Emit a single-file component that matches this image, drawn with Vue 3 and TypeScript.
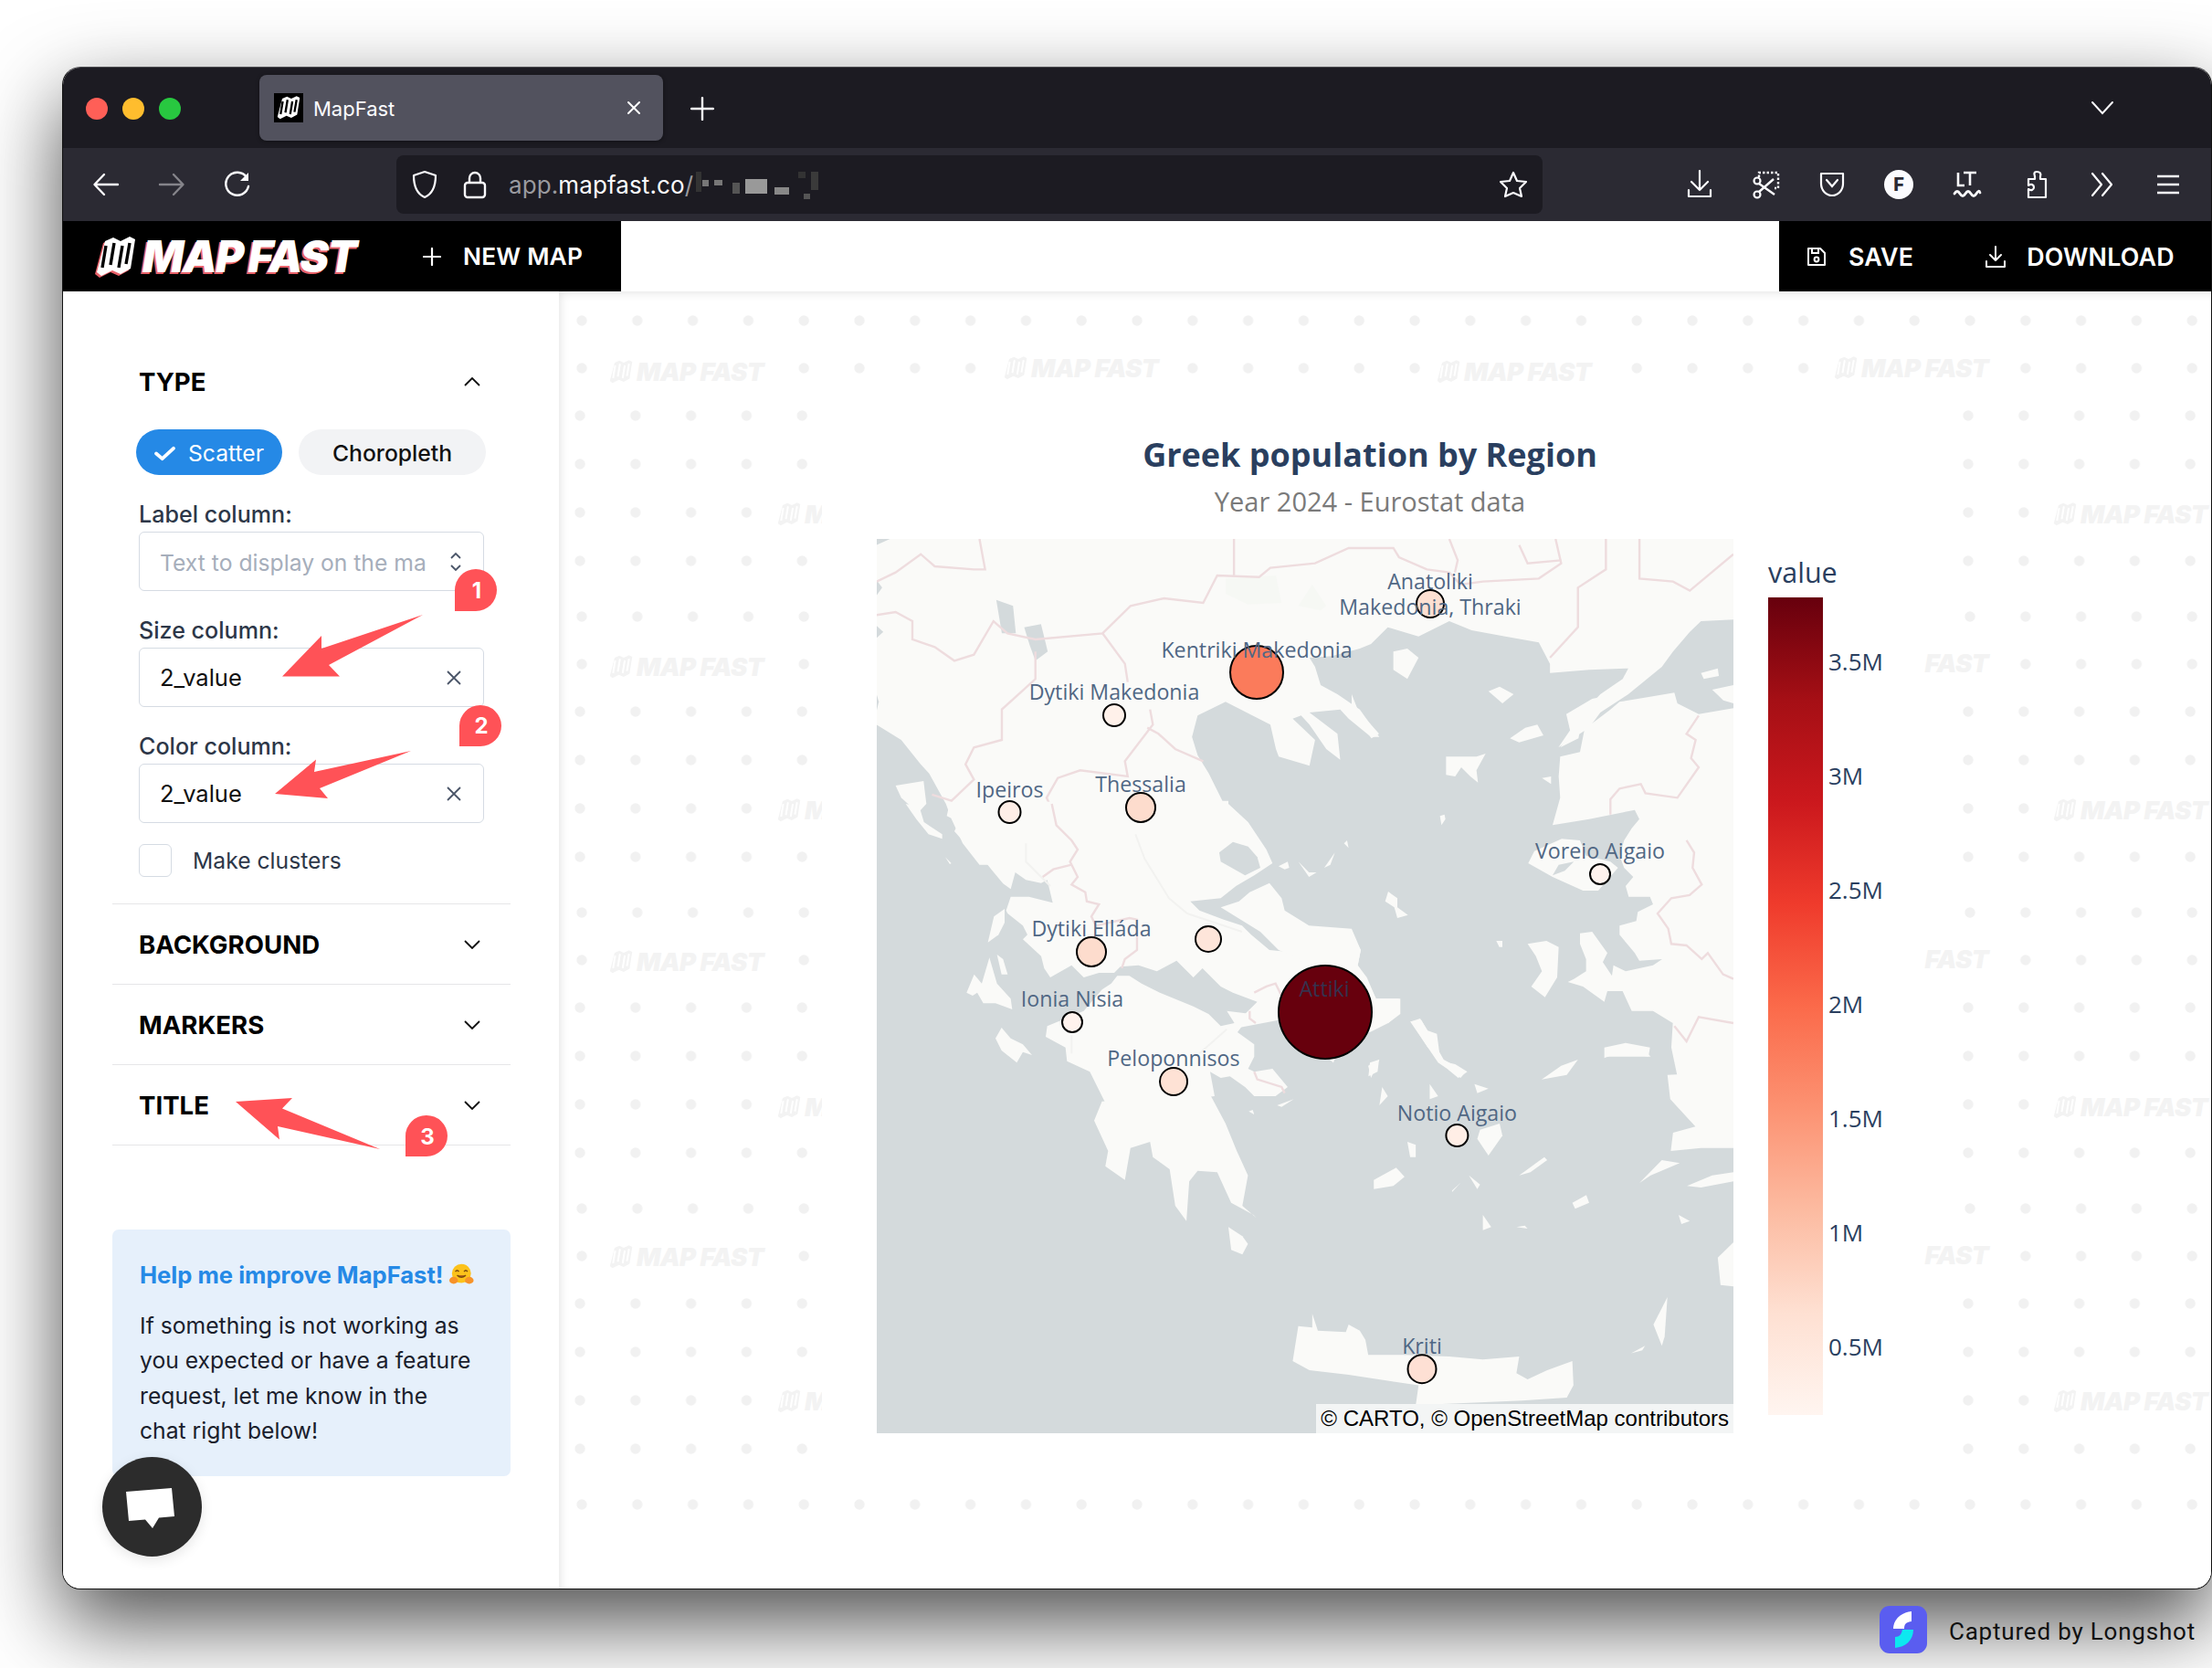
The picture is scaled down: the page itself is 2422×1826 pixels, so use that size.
<script setup lang="ts">
interface Marker { x: number; y: number; r: number; fill: string }
interface MapLabel { x: number; y: number; text: string; dark?: boolean }
interface Mark { x: number; y: number }

const mapOuter = 'M12 7 L21 3 L29 7 L39 2 L45 5 L40 37 L29 43 L20 39 L8 45 L3 41 Z'
const mapInner = 'M13 12 L9 36 M22 9 L18 33 M31 12 L27 36 M39 9 L35 32'

const markers: Marker[] = [
  { x: 1566, y: 661, r: 15, fill: '#fde0d2' },
  { x: 1376, y: 736, r: 29, fill: '#fb7b5b' },
  { x: 1220, y: 783, r: 12, fill: '#fff1ea' },
  { x: 1105.5, y: 889, r: 12, fill: '#feeee7' },
  { x: 1249, y: 884, r: 16, fill: '#fddccd' },
  { x: 1752, y: 957, r: 11, fill: '#fff3ee' },
  { x: 1195, y: 1042, r: 16, fill: '#fddccd' },
  { x: 1323, y: 1028, r: 14, fill: '#fee5da' },
  { x: 1174, y: 1119, r: 11, fill: '#fff3ee' },
  { x: 1285, y: 1184, r: 15, fill: '#fee2d5' },
  { x: 1451, y: 1108, r: 51, fill: '#67000d' },
  { x: 1595.4, y: 1243, r: 12, fill: '#ffeee6' },
  { x: 1557, y: 1498.7, r: 15.5, fill: '#fee0d4' }
]

const labels: MapLabel[] = [
  { x: 1566, y: 637, text: 'Anatoliki' },
  { x: 1566, y: 665, text: 'Makedonia, Thraki' },
  { x: 1376, y: 712, text: 'Kentriki Makedonia' },
  { x: 1220, y: 758, text: 'Dytiki Makedonia' },
  { x: 1105.5, y: 865, text: 'Ipeiros' },
  { x: 1249, y: 859, text: 'Thessalia' },
  { x: 1752, y: 932, text: 'Voreio Aigaio' },
  { x: 1195, y: 1017, text: 'Dytiki Elláda' },
  { x: 1174, y: 1094, text: 'Ionia Nisia' },
  { x: 1285, y: 1159, text: 'Peloponnisos' },
  { x: 1450, y: 1083, text: 'Attiki', dark: true },
  { x: 1595.4, y: 1219, text: 'Notio Aigaio' },
  { x: 1557, y: 1474, text: 'Kriti' }
]

// land traced in four overlapping frames of the map
const north = [
  '16,30 1548,30 1548,295 1490,300 1470,335 1440,400 1420,450 1400,480 1360,540 1310,600 1290,650 1235,715 1270,620 1310,540 1350,490 1360,455 1290,460 1220,470 1220,440 1200,370 1140,350 1080,330 1040,300 985,350 930,320 900,375 880,390 830,415 790,420 800,450 810,510 840,540 880,590 915,680 900,680 860,620 845,590 790,600 840,670 845,755 820,720 790,640 775,610 760,620 800,690 790,775 735,745 730,720 720,640 640,565 590,610 580,680 590,740 610,800 637,900 637,1000 400,1100 200,1100 170,1030 150,950 140,900 110,800 95,770 60,690 16,640',
  '50,840 100,825 105,900 90,930 60,880',
  '940,400 965,390 985,420 965,490 940,460',
  '1110,530 1130,515 1155,540 1135,570',
  '1490,470 1520,455 1522,480 1495,490',
  '1510,525 1548,510 1548,570 1530,560'
]
const centre = [
  '240,-5 230,40 270,60 255,90 290,130 340,170 380,220 415,262 440,280 455,225 490,250 540,260 560,250 578,325 500,305 440,305 425,350 430,360 480,400 495,430 480,445 540,500 550,540 570,570 640,530 680,570 730,555 780,555 800,535 860,530 920,550 985,515 1040,570 1070,540 1130,600 1170,620 1250,650 1200,700 1190,735 1320,710 1500,850 1560,700 1395,520 1390,490 1290,480 1230,430 1200,400 1140,380 1060,350 1030,320 1130,310 1180,270 1240,235 1300,195 1280,150 1220,60 1155,0 1155,-10',
  '1150,680 1175,720 1130,730 1090,690 1040,665 930,620 870,590 830,565 790,565 770,590 740,610 680,680 560,730 555,765 620,800 625,845 700,880 750,980 745,1005 1110,960 1095,880 1130,900 1160,895 1210,930 1240,960 1310,960 1350,930 1300,870 1240,880 1220,870 1240,830 1240,790 1185,750 1230,690',
  '95,0 140,10 155,60 215,100 215,115 170,100 130,50',
  '225,175 245,195 240,198',
  '295,620 320,560 345,590 370,505 395,590 440,640 445,675 390,655 350,655 330,620 315,630',
  '395,495 415,510 430,560 410,560',
  '365,455 385,370 420,345 420,390 400,430',
  '390,770 410,735 440,770 480,790 510,825 480,815 460,850 410,810',
  '1130,340 1190,320 1225,290 1290,260 1330,310 1340,350 1420,400 1560,410 1590,480 1580,530 1610,570 1640,640 1720,640 1720,690 1680,720 1620,750 1470,690 1390,510 1320,480 1260,420',
  '1320,205 1350,190 1355,210 1340,215',
  '1385,190 1420,225 1445,225 1420,240',
  '1470,210 1505,160 1490,200',
  '1535,130 1545,120 1550,145',
  '1315,990 1370,970 1330,995',
  '1222,1010 1235,1005 1240,1020'
]
const east = [
  '880,25 1060,-5 1070,30 1140,65 1260,45 1260,1260 1071,1260 1050,1160 1055,1080 990,1040 920,1040 890,975 840,975 830,1010 760,960 710,945 730,935 770,910 770,870 750,820 750,785 790,780 840,850 825,880 855,925 860,890 900,910 990,890 1020,870 945,875 930,850 880,790 880,760 935,745 940,715 990,690 980,665 910,665 900,630 925,600 895,570 880,530 895,480 920,440 945,410 930,380 780,410 660,430 685,340 680,270 685,205 750,190 765,115 850,50',
  '685,175 720,130 705,65 790,15 860,0 830,45 770,100 750,120 745,145',
  '520,145 570,110 610,100 630,135 550,158',
  '310,205 380,205 410,205 440,195 410,250 415,290 390,270 360,240 340,270 310,265',
  '625,275 655,270 655,295',
  '290,400 305,395 308,410 295,430',
  '110,680 120,648 150,670 150,700 185,725 150,735 140,700',
  '578,820 640,810 680,830 675,930 635,995 590,960 625,910 605,860',
  '475,810 495,810 495,830 485,830',
  '580,555 600,515 690,475 750,480 770,530 850,550 875,570 840,610 810,645 760,645 660,600',
  '0,790 30,840 20,890 45,930 80,1000 30,1000 0,950',
  '80,1000 155,1000 155,1050 120,1080 90,1070',
  '195,1075 225,1065 250,1105 280,1115 290,1190 250,1160',
  '60,1210 90,1200 85,1240 55,1255',
  '295,1205 340,1215 380,1240 350,1260 320,1235',
  '830,1160 900,1145 980,1160 975,1190 880,1175 830,1195',
  '0,0 20,50 90,130 65,145 25,90 0,50',
  '480,0 525,0 490,25'
]
const seaEast = ['660,595 680,560 730,550 700,580']
const south = [
  '419,437 405,500 430,600 425,650 460,695 470,590 505,570 510,620 540,660 550,780 570,830 575,700 590,665 625,670 650,770 690,810 695,820 670,780 680,680 660,600 640,510 613,417',
  '645,850 670,880 680,905 670,940 650,925',
  '760,1290 770,1175 795,1180 795,1135 805,1190 855,1195 860,1170 880,1190 890,1220 895,1270 960,1270 1040,1275 1100,1285 1165,1275 1160,1330 1180,1350 1215,1320 1260,1290 1262,1370 1250,1410 1170,1420 980,1435 985,1370 860,1335 790,1320',
  '1430,350 1435,430 1480,520 1440,540 1436,600 1490,590 1548,590 1548,340',
  '1095,530 1130,510 1135,550 1110,615 1090,560',
  '965,570 980,580 980,620 970,620',
  '970,175 990,170 1030,300 1070,340 1060,360 1020,310',
  '895,320 915,300 900,360',
  '920,390 930,420 915,450',
  '1005,380 1020,420 1005,430',
  '1085,380 1110,395 1090,410',
  '905,695 945,655 960,685 940,715 905,725',
  '1075,680 1095,710 1090,725',
  '1045,730 1060,705 1045,735',
  '1100,810 1115,850 1100,860',
  '1165,680 1210,620 1215,630 1185,670',
  '1405,1170 1430,1080 1425,1210 1420,1240',
  '1365,1265 1390,1240 1385,1255',
  '1205,365 1240,320 1270,300 1250,350',
  '1320,290 1350,250 1390,270 1400,290 1350,290',
  '1465,715 1510,680 1548,670 1548,700 1490,720',
  '1380,705 1420,630 1452,640 1400,680',
  '1525,1040 1520,950 1548,900 1548,1045',
  '1260,770 1285,745 1290,770 1265,790',
  '1450,810 1470,830 1455,840',
  '1160,850 1175,845 1180,855'
]

const seaCentre = ['1125,160 1170,125 1220,140 1250,175 1260,210 1210,235 1130,190']
const lakes = [
  '230,230 260,250 265,340 240,340',
  '280,320 310,310 322,400 300,430 290,380',
  '16,30 40,30 16,50',
  '16,165 26,190 16,215',
  '16,315 28,335 16,355',
  '16,540 20,565 16,595'
]

const bordersNorth = [
  '16,280 50,270 80,300 80,360 120,385 155,430 190,410 225,300 250,340 300,360 420,340 470,250 530,225 600,240 625,150 700,155 720,125 800,110 860,60 940,60 950,90 1000,130 1040,140 1060,180 1100,170 1200,160 1240,110 1230,30',
  '200,30 210,130 190,130 120,120 95,80 50,140 16,170',
  '655,30 655,150',
  '1040,30 1055,100 1050,140',
  '1165,50 1180,110 1240,100',
  '1320,30 1320,130 1270,190 1270,320 1220,420',
  '1380,30 1380,160 1440,170 1470,200 1548,80',
  '300,400 300,490 240,590 240,690 190,715 175,770 190,820 150,890 115,870',
  '420,340 460,440 465,500',
  '505,590 510,640 460,760 465,810 380,790 340,815 320,880 340,960 375,1050 365,1110 380,1170 410,1235 400,1300',
  '500,650 520,670 550,720 600,760'
]
const bordersCentre = [
  '575,0 590,70 640,120 660,150 635,190 660,240 640,265 685,290 690,320 730,330 705,370 720,400 830,375 855,380 855,480 815,510 805,540',
  '545,240 580,215 640,200',
  '1225,680 1225,705 1245,720',
  '1240,620 1280,600 1310,590 1330,630',
  '1240,880 1250,905 1330,930 1340,950'
]
const bordersEast = [
  '850,395 850,345 880,310 950,295 965,325 1070,340 1140,240 1115,210 1130,150 1100,130 1140,70',
  '1100,480 1125,520 1120,570 1150,625 1110,660 1050,670 1005,720 1040,770 1050,820 1100,825 1150,870 1170,850 1220,920 1254,935',
  '1060,1090 1100,1140 1140,1060 1254,1080'
]
const faintCentre = [
  '850,100 880,180 960,310 1020,360 1200,420',
  '490,130 490,190 570,270',
  '640,760 640,820',
  '860,1060 860,980 920,980 1000,1090',
  '1150,740 1060,820'
]

const ticks = ['3.5M', '3M', '2.5M', '2M', '1.5M', '1M', '0.5M']

const wmAt = (x: number, y: number): Mark => ({ x: x - 612, y: y - 319 })
const watermarks: Mark[] = [
  wmAt(670, 407), wmAt(1102, 403), wmAt(1576, 407), wmAt(2011, 403),
  wmAt(854, 563), wmAt(2251, 563),
  wmAt(670, 730), wmAt(2011, 726),
  wmAt(854, 887), wmAt(2251, 887),
  wmAt(670, 1053), wmAt(2011, 1050),
  wmAt(854, 1212), wmAt(2251, 1212),
  wmAt(670, 1376), wmAt(2011, 1374),
  wmAt(854, 1534), wmAt(2251, 1534)
]

const dotRows = [
  { y: 32, x: 25 }, { y: 84, x: 25 }, { y: 136, x: 23 },
  { y: 189, x: 23 }, { y: 242, x: 23 }, { y: 295, x: 23 }
]

const collapsed = ['BACKGROUND', 'MARKERS', 'TITLE']
const pixels = [
  [762, 188, 6, 22, '#333'], [769, 197, 7, 7, '#777'], [782, 197, 9, 6, '#777'],
  [802, 200, 8, 12, '#555'], [816, 196, 24, 16, '#999'], [848, 205, 16, 8, '#888'],
  [874, 188, 8, 7, '#333'], [888, 188, 8, 20, '#3a3a3a'], [880, 212, 7, 6, '#555']
] as const
</script>

<template>
  <div class="page">
    <div class="window">
      <div class="tabbar">
        <div class="lights">
          <span class="light red"></span>
          <span class="light yellow"></span>
          <span class="light green"></span>
        </div>
        <div class="tab">
          <span class="favicon">
            <svg viewBox="0 0 48 48" width="28" height="28">
              <path :d="mapOuter" fill="#fff" />
              <path :d="mapInner" stroke="#000" stroke-width="4" fill="none" />
            </svg>
          </span>
          <span class="tab-title">MapFast</span>
          <svg class="tab-close" viewBox="0 0 16 16" width="16" height="16">
            <path d="M2 2 L14 14 M14 2 L2 14" stroke="#fff" stroke-width="2" stroke-linecap="round" />
          </svg>
        </div>
        <svg class="new-tab" viewBox="0 0 24 24" width="26" height="26">
          <path d="M12 1 V23 M1 12 H23" stroke="#fbfbfe" stroke-width="2.2" stroke-linecap="round" />
        </svg>
        <svg class="tabs-menu" viewBox="0 0 24 16" width="26" height="16">
          <path d="M1 2 L12 14 L23 2" stroke="#fbfbfe" stroke-width="2" fill="none" stroke-linecap="round" />
        </svg>
      </div>

      <div class="toolbar">
        <button class="tool-btn">
          <svg viewBox="0 0 30 30" width="30" height="30"><path d="M28 15 H3 M13 4 L2.5 15 L13 26" stroke="#fbfbfe" stroke-width="2.4" fill="none" stroke-linecap="round" stroke-linejoin="round" /></svg>
        </button>
        <button class="tool-btn">
          <svg viewBox="0 0 30 30" width="30" height="30"><path d="M2 15 H27 M17 4 L27.5 15 L17 26" stroke="#85848a" stroke-width="2.4" fill="none" stroke-linecap="round" stroke-linejoin="round" /></svg>
        </button>
        <button class="tool-btn">
          <svg viewBox="0 0 30 30" width="30" height="30"><path d="M25 7 A12.5 12.5 0 1 0 27 17" stroke="#fbfbfe" stroke-width="2.4" fill="none" stroke-linecap="round" /><path d="M18 11 H27 V2 Z" fill="#fbfbfe" /></svg>
        </button>

        <div class="urlbar">
          <svg class="url-icon" viewBox="0 0 30 32" width="30" height="32"><path d="M15 2 L27 6 C27 18 24 26 15 30 C6 26 3 18 3 6 Z" stroke="#fbfbfe" stroke-width="2.2" fill="none" stroke-linejoin="round" /></svg>
          <svg class="url-icon lock" viewBox="0 0 26 32" width="26" height="32"><path d="M7 14 V9 A6 6 0 0 1 19 9 V14" stroke="#fbfbfe" stroke-width="2.4" fill="none" /><rect x="2" y="14" width="22" height="16" rx="3" stroke="#fbfbfe" stroke-width="2.4" fill="none" /></svg>
          <span class="url"><span class="url-dim">app.</span>mapfast.co<span class="url-dim">/</span></span>
          <svg class="url-star" viewBox="0 0 32 32" width="32" height="32"><path d="M16 3 L20 12 L30 13 L23 20 L25 29 L16 25 L7 29 L9 20 L2 13 L12 12 Z" stroke="#fbfbfe" stroke-width="2.2" fill="none" stroke-linejoin="round" /></svg>
        </div>

        <div class="tool-right">
          <button class="tool-btn right">
            <svg viewBox="0 0 30 32" width="30" height="32"><path d="M15 1 V22 M6 13 L15 22 L24 13 M3 22 V29 H27 V22" stroke="#fbfbfe" stroke-width="2.2" fill="none" stroke-linecap="round" stroke-linejoin="round" /></svg>
          </button>
          <button class="tool-btn right">
            <svg viewBox="0 0 32 32" width="32" height="32">
              <path d="M8 8 V3 H29 V20 H25" stroke="#fbfbfe" stroke-width="2.4" stroke-dasharray="2.5 2" fill="none" />
              <path d="M8 15 L25 27 M24 10 L8 24" stroke="#fbfbfe" stroke-width="2.4" />
              <circle cx="6" cy="12" r="3.5" stroke="#fbfbfe" stroke-width="2.2" fill="none" />
              <circle cx="6" cy="27" r="3.5" stroke="#fbfbfe" stroke-width="2.2" fill="none" />
            </svg>
          </button>
          <button class="tool-btn right">
            <svg viewBox="0 0 30 30" width="30" height="30"><path d="M3 3 H27 V14 A12 13 0 0 1 3 14 Z" stroke="#fbfbfe" stroke-width="2.2" fill="none" stroke-linejoin="round" /><path d="M9 10 L15 17 L21 10" stroke="#fbfbfe" stroke-width="2.2" fill="none" stroke-linecap="round" /></svg>
          </button>
          <button class="tool-btn right">
            <span class="f-badge">F</span>
          </button>
          <button class="tool-btn right lt">
            <svg viewBox="0 0 32 32" width="32" height="32"><path d="M6 3 V17 H13 M12 3 H26 M19 3 V17" stroke="#fbfbfe" stroke-width="2.6" fill="none" /><path d="M2 26 Q5 21 8 26 T14 26 T20 26 T26 26 T30 25" stroke="#fbfbfe" stroke-width="2.8" fill="none" stroke-linecap="round" /></svg>
          </button>
          <button class="tool-btn right puzzle">
            <svg viewBox="0 0 30 32" width="30" height="32"><path d="M14 2 C11 2 11 4 12 7 V10 H5 V17 C8 15 11 16 11 19 C11 22 8 23 5 21 V30 H24 V10 H18 V7 C19 4 18 2 14 2 Z" stroke="#fbfbfe" stroke-width="2.2" fill="none" stroke-linejoin="round" /></svg>
          </button>
          <button class="tool-btn right more">
            <svg viewBox="0 0 30 30" width="30" height="30"><path d="M4 3 L14 15 L4 27 M15 3 L25 15 L15 27" stroke="#fbfbfe" stroke-width="2.2" fill="none" stroke-linecap="round" stroke-linejoin="round" /></svg>
          </button>
          <button class="tool-btn right burger">
            <svg viewBox="0 0 28 24" width="28" height="24"><path d="M2 3 H26 M2 12 H26 M2 21 H26" stroke="#fbfbfe" stroke-width="2.4" /></svg>
          </button>
        </div>

        <svg class="blur-pixels" viewBox="0 0 2422 1826" width="2422" height="1826">
          <rect v-for="(p, i) in pixels" :key="i" :x="p[0]" :y="p[1] - 73" :width="p[2]" :height="p[3]" :fill="p[4]" />
        </svg>
      </div>

      <header class="appbar">
        <div class="appbar-left">
          <div class="logo">
            <svg viewBox="0 0 48 48" width="48" height="48">
              <path :d="mapOuter" fill="#e8626a" transform="translate(-2 2)" />
              <path :d="mapOuter" fill="#fff" />
              <path :d="mapInner" stroke="#000" stroke-width="3.4" fill="none" />
            </svg>
            <span class="logo-text">MAP FAST</span>
          </div>
          <button class="app-btn new-map">
            <svg viewBox="0 0 20 20" width="20" height="20"><path d="M10 1 V19 M1 10 H19" stroke="#fff" stroke-width="2.2" stroke-linecap="round" /></svg>
            <span>NEW MAP</span>
          </button>
        </div>
        <div class="appbar-gap"></div>
        <div class="appbar-right">
          <button class="app-btn save">
            <svg viewBox="0 0 22 24" width="22" height="24"><path d="M2 3 H15 L20 8 V21 H2 Z" stroke="#fff" stroke-width="2" fill="none" stroke-linejoin="round" /><path d="M6 3 V8 H13 V3" stroke="#fff" stroke-width="2" fill="none" /><circle cx="11" cy="15" r="2.4" stroke="#fff" stroke-width="2" fill="none" /></svg>
            <span>SAVE</span>
          </button>
          <button class="app-btn download">
            <svg viewBox="0 0 24 26" width="24" height="26"><path d="M12 2 V17 M6 11 L12 17 L18 11 M2 18 V24 H22 V18" stroke="#fff" stroke-width="2" fill="none" stroke-linecap="round" stroke-linejoin="round" /></svg>
            <span>DOWNLOAD</span>
          </button>
        </div>
      </header>

      <div class="body">
        <aside class="sidebar">
          <section class="acc-section open">
            <div class="acc-head">
              <span>TYPE</span>
              <svg viewBox="0 0 18 10" width="18" height="10"><path d="M1 9 L9 1 L17 9" stroke="#111" stroke-width="1.8" fill="none" /></svg>
            </div>
            <div class="pills">
              <button class="pill active">
                <svg viewBox="0 0 24 18" width="23" height="17"><path d="M2 9 L9 15 L22 3" stroke="#fff" stroke-width="4" fill="none" stroke-linecap="round" stroke-linejoin="round" /></svg>
                <span>Scatter</span>
              </button>
              <button class="pill">Choropleth</button>
            </div>
            <label class="field-label">Label column:</label>
            <div class="select">
              <span class="placeholder">Text to display on the ma</span>
              <svg class="sel-icon" viewBox="0 0 14 22" width="14" height="22"><path d="M2 7 L7 2 L12 7 M2 15 L7 20 L12 15" stroke="#4a5568" stroke-width="1.8" fill="none" /></svg>
            </div>
            <label class="field-label">Size column:</label>
            <div class="select">
              <span class="value">2_value</span>
              <svg class="sel-icon" viewBox="0 0 18 18" width="18" height="18"><path d="M2 2 L16 16 M16 2 L2 16" stroke="#4a5568" stroke-width="1.8" /></svg>
            </div>
            <label class="field-label">Color column:</label>
            <div class="select">
              <span class="value">2_value</span>
              <svg class="sel-icon" viewBox="0 0 18 18" width="18" height="18"><path d="M2 2 L16 16 M16 2 L2 16" stroke="#4a5568" stroke-width="1.8" /></svg>
            </div>
            <div class="check-row">
              <span class="checkbox"></span>
              <span>Make clusters</span>
            </div>
          </section>

          <section v-for="name in collapsed" :key="name" class="acc-section">
            <div class="acc-head closed">
              <span>{{ name }}</span>
              <svg viewBox="0 0 18 10" width="18" height="10"><path d="M1 1 L9 9 L17 1" stroke="#111" stroke-width="1.8" fill="none" /></svg>
            </div>
          </section>

          <div class="help">
            <div class="help-title">
              <span>Help me improve MapFast!</span>
              <svg viewBox="0 0 28 26" width="28" height="26">
                <circle cx="14" cy="12" r="11" fill="#fcc21b" />
                <path d="M7 10 Q9 7 11 10 M17 10 Q19 7 21 10" stroke="#7a4a10" stroke-width="1.6" fill="none" />
                <path d="M9 14 Q14 19 19 14" stroke="#7a4a10" stroke-width="1.6" fill="#b5651d" />
                <ellipse cx="5" cy="20" rx="5" ry="4" fill="#f79329" />
                <ellipse cx="23" cy="20" rx="5" ry="4" fill="#f79329" />
              </svg>
            </div>
            <p>If something is not working as you expected or have a feature request, let me know in the chat right below!</p>
          </div>

          <button class="chat">
            <svg viewBox="0 0 109 109" width="109" height="109"><path d="M26 38 L76 34 L79 65 L62 66.5 L55 78 L47 68.5 L29 70 Z" fill="#fff" /></svg>
          </button>

          <!-- red arrows added on the screenshot -->
          <svg class="annotations" viewBox="69 319 544 1421">
            <polygon points="309,740.5 352,696 352,710 463,673 360,728 372,740.5" />
            <polygon points="301,869 346,831.6 344,845 450,822 350,863 359,874" />
            <polygon points="258,1206 320,1202 309,1213.6 416,1258 304,1233 306,1247.6" />
            <path d="M498 669 V646 A23 23 0 1 1 521 669 Z" />
            <path d="M503 817 V795 A23 22.5 0 1 1 526 817 Z" />
            <path d="M444 1266 V1244 A23 22.5 0 1 1 467 1266 Z" />
            <text x="522" y="655">1</text>
            <text x="527" y="803">2</text>
            <text x="468" y="1253">3</text>
          </svg>
        </aside>

        <main class="main">
          <svg class="dots" width="100%" height="1341">
            <defs>
              <pattern id="dot-tile" x="0" y="0" width="60.8" height="324" patternUnits="userSpaceOnUse">
                <circle v-for="row in dotRows" :key="row.y" :cx="row.x" :cy="row.y" r="5.7" fill="#f1f1f1" />
              </pattern>
            </defs>
            <rect width="100%" height="100%" fill="url(#dot-tile)" />
          </svg>
          <div
            v-for="(w, i) in watermarks"
            :key="i"
            class="watermark"
            :style="{ left: w.x - 8 + 'px', top: w.y - 20 + 'px' }"
          >
            <svg viewBox="0 0 48 48" width="30" height="28"><path :d="mapOuter" fill="#f3f3f3" /><path :d="mapInner" stroke="#fff" stroke-width="3.4" fill="none" /></svg>
            <span>MAP FAST</span>
          </div>

          <div class="plot">
            <h1 class="plot-title">Greek population by Region</h1>
            <div class="plot-sub">Year 2024 - Eurostat data</div>
            <div class="plot-row">
              <div class="map">
                <svg viewBox="960 590 938 979" width="938" height="979">
                  <rect x="960" y="590" width="938" height="979" fill="#d4dadc" />
                  <g transform="translate(950 580) scale(.6124 .3333)" fill="#fafaf8">
                    <polygon v-for="(p, i) in north" :key="i" :points="p" />
                    <polygon points="640,160 730,150 740,240 680,245 640,210" fill="#f6f8f4" />
                    <polygon points="770,250 795,180 820,250 810,265" fill="#f6f8f4" />
                    <polygon v-for="(p, i) in lakes" :key="i" :points="p" fill="#d4dadc" />
                    <polyline v-for="(p, i) in bordersNorth" :key="i" :points="p" class="border" />
                  </g>
                  <g transform="translate(960 880) scale(.3333)" fill="#fafaf8">
                    <polygon v-for="(p, i) in centre" :key="i" :points="p" />
                    <polygon v-for="(p, i) in seaCentre" :key="i" :points="p" fill="#d4dadc" />
                    <polyline v-for="(p, i) in faintCentre" :key="i" :points="p" class="faint" />
                    <polyline v-for="(p, i) in bordersCentre" :key="i" :points="p" class="border" />
                  </g>
                  <g transform="translate(1480 760) scale(.3333)" fill="#fafaf8">
                    <polygon v-for="(p, i) in east" :key="i" :points="p" />
                    <polygon v-for="(p, i) in seaEast" :key="i" :points="p" fill="#d4dadc" />
                    <polyline v-for="(p, i) in bordersEast" :key="i" :points="p" class="border" />
                  </g>
                  <g transform="translate(950 1060) scale(.6124 .3333)" fill="#fafaf8">
                    <polygon v-for="(p, i) in south" :key="i" :points="p" />
                  </g>
                  <circle
                    v-for="(m, i) in markers"
                    :key="i"
                    :cx="m.x"
                    :cy="m.y"
                    :r="m.r"
                    :fill="m.fill"
                    stroke="#000"
                    stroke-width="2"
                  />
                  <text
                    v-for="l in labels"
                    :key="l.text"
                    :x="l.x"
                    :y="l.y + 8"
                    class="map-label"
                    :class="{ dark: l.dark }"
                  >{{ l.text }}</text>
                </svg>
                <div class="attribution">© CARTO, © OpenStreetMap contributors</div>
              </div>
              <div class="legend">
                <div class="legend-title">value</div>
                <div class="legend-body">
                  <div class="colorbar"></div>
                  <div class="ticks">
                    <div v-for="t in ticks" :key="t" class="tick">{{ t }}</div>
                  </div>
                </div>
              </div>
            </div>
          </div>
        </main>
      </div>
    </div>

    <div class="captured">
      <svg viewBox="0 0 52 52" width="52" height="52">
        <rect width="52" height="52" rx="11" fill="#5a5df0" />
        <path d="M15 25 C15 14 25 7 35 6 L35 17 C28 18 27 21 27 25 Z" fill="#fff" />
        <path d="M17 46 L17 34 C22 34 24 31 25 26 L37 26 C37 38 28 45 17 46 Z" fill="#0de8f0" />
      </svg>
      <span class="captured-text">Captured by Longshot</span>
    </div>
  </div>
</template>

<style>
html,
body {
  margin: 0;
  background: #fff;
  overflow: hidden;
}
</style>

<style scoped>
.page {
  width: 2422px;
  height: 1826px;
  padding: 73px 0 0 68px;
  box-sizing: border-box;
  overflow: hidden;
  font-family: Inter, "Liberation Sans", sans-serif;
}

.window {
  position: relative;
  width: 2354px;
  height: 1667px;
  box-sizing: border-box;
  border: 1px solid #111;
  border-top-color: #4a4a4e;
  border-radius: 20px;
  overflow: hidden;
  display: flex;
  flex-direction: column;
  background: #fff;
  box-shadow: 0 36px 90px rgba(0, 0, 0, 0.7);
}

button {
  border: none;
  background: none;
  padding: 0;
  font: inherit;
  color: inherit;
}

.tabbar {
  height: 88px;
  flex-shrink: 0;
  background: #1c1b22;
  display: flex;
  align-items: center;
  padding-left: 25px;
}

.lights {
  display: flex;
  gap: 16px;
  margin-top: 2px;
}

.light {
  width: 24px;
  height: 24px;
  border-radius: 50%;
}

.light.red { background: #ff5f57; }
.light.yellow { background: #ffbd2e; }
.light.green { background: #28c840; }

.tab {
  width: 442px;
  height: 72px;
  margin-left: 86px;
  border-radius: 8px;
  background: #52525e;
  box-shadow: 0 1px 4px rgba(0, 0, 0, 0.4);
  display: flex;
  align-items: center;
  padding: 0 24px 0 16px;
  box-sizing: border-box;
  color: #fbfbfe;
}

.favicon {
  width: 32px;
  height: 32px;
  background: #000;
  display: flex;
  align-items: center;
  justify-content: center;
  flex-shrink: 0;
}

.tab-title {
  font-size: 22px;
  margin: 2px 0 0 11px;
  flex: 1;
}

.new-tab {
  margin: 2px 0 0 30px;
}

.tabs-menu {
  margin-left: auto;
  margin-right: 106px;
}

.toolbar {
  position: relative;
  height: 80px;
  flex-shrink: 0;
  background: #2b2a33;
  display: flex;
  align-items: center;
  padding-left: 11px;
}

.tool-btn {
  width: 72px;
  height: 56px;
  display: flex;
  align-items: center;
  justify-content: center;
  flex-shrink: 0;
}

.tool-btn.right {
  width: 72.6px;
}

.tool-btn.lt { margin-left: 2.4px; }
.tool-btn.puzzle { margin-left: 4.6px; }
.tool-btn.more { margin-left: -2px; }
.tool-btn.burger { margin-left: -0.6px; }

.urlbar {
  width: 1255px;
  height: 64px;
  margin-left: 138px;
  border-radius: 8px;
  background: #1c1b22;
  display: flex;
  align-items: center;
  box-sizing: border-box;
  padding: 0 16px 0 16px;
  color: #fbfbfe;
  flex-shrink: 0;
}

.url-icon.lock {
  margin-left: 27px;
}

.url {
  font-size: 26px;
  margin-left: 24px;
  letter-spacing: 0.1px;
}

.url-dim {
  color: #9a9a9f;
}

.url-star {
  margin-left: auto;
}

.tool-right {
  display: flex;
  margin-left: 136px;
}

.f-badge {
  width: 32px;
  height: 32px;
  border-radius: 50%;
  background: #fbfbfe;
  color: #2b2a33;
  font-size: 20px;
  font-weight: 800;
  display: flex;
  align-items: center;
  justify-content: center;
}

.blur-pixels {
  position: absolute;
  left: -69px;
  top: -89px;
  pointer-events: none;
}

.appbar {
  height: 77px;
  flex-shrink: 0;
  display: flex;
  color: #fff;
}

.appbar-left {
  width: 611px;
  background: #000;
  display: flex;
  align-items: center;
  padding-left: 34px;
  box-sizing: border-box;
}

.appbar-gap {
  flex: 1;
  background: #fff;
}

.appbar-right {
  width: 473px;
  background: #000;
  display: flex;
  align-items: center;
  padding-left: 30px;
  box-sizing: border-box;
}

.logo {
  display: flex;
  align-items: center;
  gap: 5px;
  width: 296px;
  flex-shrink: 0;
}

.logo-text {
  font-size: 47.5px;
  font-weight: 900;
  font-style: italic;
  letter-spacing: -1.5px;
  word-spacing: -2px;
  color: #fff;
  text-shadow: -2px 2px 0 #e8626a;
  white-space: nowrap;
}

.app-btn {
  display: flex;
  align-items: center;
  font-size: 26.8px;
  font-weight: 600;
  color: #fff;
  letter-spacing: 0.2px;
}

.new-map {
  margin-left: 64px;
  gap: 24px;
  font-size: 26.3px;
}

.save {
  gap: 24px;
}

.download {
  margin-left: 78px;
  gap: 22px;
}

.body {
  flex: 1;
  display: flex;
  min-height: 0;
}

.sidebar {
  position: relative;
  width: 543px;
  flex-shrink: 0;
  box-sizing: border-box;
  padding: 79px 53px 0 54px;
  background: #fff;
}

.acc-section {
  border-bottom: 1px solid #e6e6e8;
}

.acc-section.open {
  padding-bottom: 29px;
}

.acc-head {
  display: flex;
  align-items: center;
  justify-content: space-between;
  padding: 0 33px 0 29px;
  height: 40px;
  font-size: 27.6px;
  font-weight: 700;
  color: #000;
}

.acc-head.closed {
  height: 87px;
  box-sizing: border-box;
}

.pills {
  display: flex;
  gap: 18px;
  margin: 32px 0 28px 26px;
}

.pill {
  height: 50px;
  width: 205px;
  border-radius: 25px;
  background: #f2f3f5;
  font-size: 24.7px;
  font-weight: 500;
  color: #111;
  display: flex;
  align-items: center;
  justify-content: center;
  padding-top: 2px;
  box-sizing: border-box;
}

.pill.active {
  width: 160px;
  background: #2589e6;
  color: #fff;
  gap: 14px;
  font-weight: 400;
}

.field-label {
  display: block;
  margin-left: 29px;
  height: 30px;
  line-height: 30px;
  font-size: 25.1px;
  font-weight: 500;
  color: #2d3748;
}

.select {
  margin: 4px 29px 28px;
  height: 65px;
  width: 378px;
  box-sizing: border-box;
  border: 1.5px solid #d5dbe3;
  border-radius: 6px;
  display: flex;
  align-items: center;
  justify-content: space-between;
  padding: 0 23px 0 22px;
  font-size: 24.7px;
}

.placeholder {
  color: #a6aebb;
  width: 294px;
  padding-top: 2px;
  overflow: hidden;
  white-space: nowrap;
}

.value {
  color: #111;
  font-size: 25.5px;
}

.sel-icon {
  flex-shrink: 0;
}

.check-row {
  display: flex;
  align-items: center;
  gap: 23px;
  margin: -5px 0 0 29px;
  font-size: 24.7px;
  color: #2d3748;
}

.checkbox {
  width: 36px;
  height: 36px;
  box-sizing: border-box;
  border: 1.5px solid #d5dbe3;
  border-radius: 6px;
}

.help {
  margin-top: 92px;
  height: 270px;
  box-sizing: border-box;
  padding: 33px 40px 0 30px;
  border-radius: 7px;
  background: #e6f0fb;
}

.help-title {
  display: flex;
  align-items: center;
  gap: 7px;
  height: 32px;
  font-size: 25.6px;
  font-weight: 700;
  color: #2589e6;
  white-space: nowrap;
}

.help p {
  margin: 21px 0 0;
  font-size: 24.7px;
  line-height: 38.4px;
  color: #1a202c;
}

.chat {
  position: absolute;
  left: 43px;
  bottom: 35px;
  width: 109px;
  height: 109px;
  border-radius: 50%;
  background: #2c2c2c;
  box-shadow: 0 4px 14px rgba(0, 0, 0, 0.1);
}

.annotations {
  position: absolute;
  left: 0;
  top: 0;
  width: 544px;
  height: 1421px;
  fill: #ff5257;
  pointer-events: none;
  overflow: visible;
}

.annotations text {
  fill: #fff;
  font-size: 24px;
  font-weight: 700;
  text-anchor: middle;
}

.main {
  position: relative;
  flex: 1;
  min-width: 0;
  overflow: hidden;
  padding: 111px 0 0 288px;
  background: #fff;
}

.main::after {
  content: "";
  position: absolute;
  inset: 0;
  pointer-events: none;
  box-shadow: inset 8px 8px 12px -8px rgba(0, 0, 0, 0.14);
}

.dots {
  position: absolute;
  left: 0;
  top: 0;
}

.watermark {
  position: absolute;
  height: 40px;
  width: 186px;
  display: flex;
  align-items: center;
  gap: 2px;
  padding-left: 3px;
  box-sizing: border-box;
  background: #fff;
  font-size: 27.6px;
  font-weight: 900;
  font-style: italic;
  letter-spacing: -0.6px;
  color: #f3f3f3;
  white-space: nowrap;
  overflow: hidden;
}

.plot {
  position: relative;
  width: 1207px;
  height: 1195px;
  background: #fff;
}

.plot-title {
  margin: 0;
  padding-top: 45px;
  width: 1200px;
  text-align: center;
  font-family: "Open Sans", sans-serif;
  font-size: 36px;
  font-weight: 700;
  line-height: 46px;
  color: #2a3f5f;
}

.plot-sub {
  width: 1200px;
  margin-top: 10px;
  text-align: center;
  font-family: "Open Sans", sans-serif;
  font-size: 29px;
  line-height: 36px;
  color: #7a7a7a;
}

.plot-row {
  display: flex;
  margin: 23px 0 0 60px;
}

.map {
  position: relative;
  width: 938px;
  height: 979px;
  flex-shrink: 0;
}

.map svg {
  display: block;
}

.border {
  fill: none;
  stroke: #eedcde;
  stroke-width: 2.4;
  vector-effect: non-scaling-stroke;
}

.faint {
  fill: none;
  stroke: #f2f2f0;
  stroke-width: 2;
  vector-effect: non-scaling-stroke;
}

.map-label {
  font-family: "Open Sans", sans-serif;
  font-size: 23.2px;
  fill: #506784;
  text-anchor: middle;
}

.map-label.dark {
  fill: #2a3f5f;
  opacity: 0.8;
}

.attribution {
  position: absolute;
  right: 0;
  bottom: 0;
  height: 32px;
  padding: 0 5px;
  background: #f3f5f5;
  font-family: "Liberation Sans", sans-serif;
  font-size: 24px;
  line-height: 31px;
  color: #000;
  white-space: nowrap;
}

.legend {
  margin-left: 38px;
  font-family: "Open Sans", sans-serif;
  color: #2a3f5f;
}

.legend-title {
  height: 64px;
  font-size: 30.5px;
  line-height: 72px;
}

.legend-body {
  display: flex;
}

.colorbar {
  width: 60px;
  height: 895px;
  background: linear-gradient(to bottom, #67000d, #a50f15, #cb181d, #ef3b2c, #fb6a4a, #fc9272, #fcbba1, #fee0d2, #fff5f0);
}

.ticks {
  padding: 8px 0 0 6px;
}

.tick {
  height: 125px;
  line-height: 125px;
  font-size: 26px;
}

.captured {
  display: flex;
  align-items: center;
  justify-content: flex-end;
  gap: 24px;
  margin-top: 18px;
  padding-right: 18px;
  position: relative;
  font-family: Roboto, sans-serif;
  font-size: 26px;
  letter-spacing: 0.8px;
  color: #111;
}

.captured-text {
  margin-top: 4px;
}
</style>
